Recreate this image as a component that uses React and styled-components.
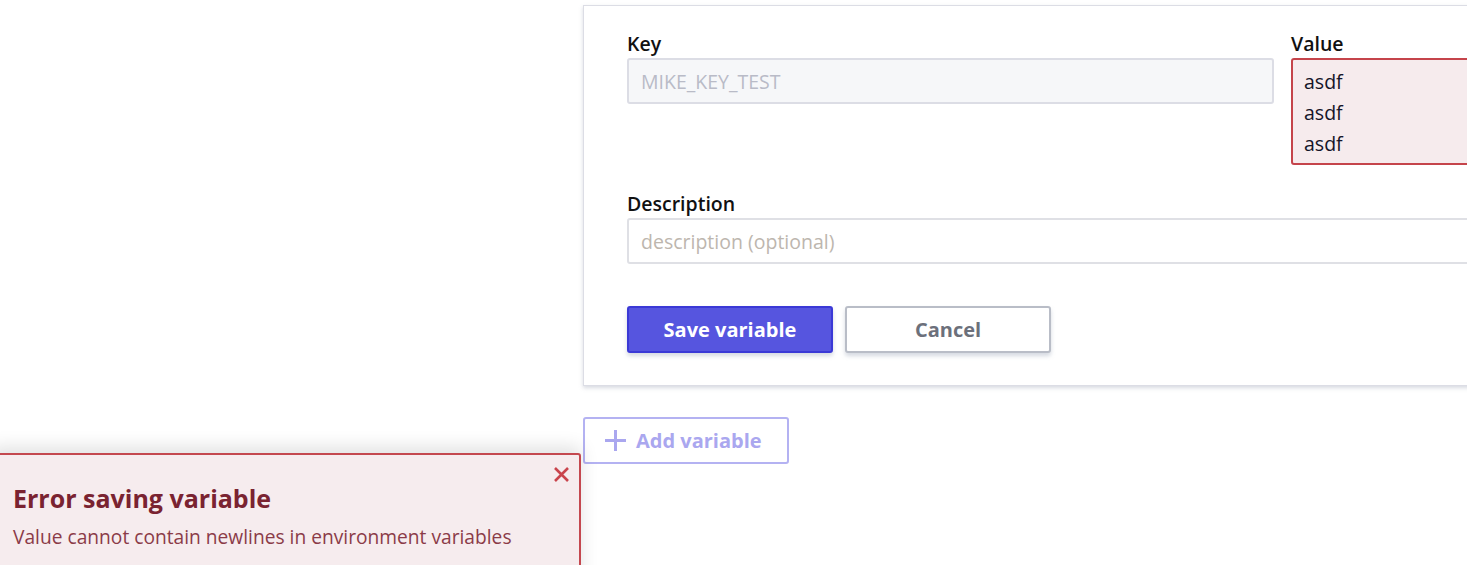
import styled, { createGlobalStyle } from 'styled-components';

const GlobalStyle = createGlobalStyle`
  html, body {
    margin: 0;
    padding: 0;
    background: #ffffff;
    overflow: hidden;
    font-family: "Open Sans", "Noto Sans", sans-serif;
  }
  * { box-sizing: border-box; }
`;

const Page = styled.div`
  width: 1467px;
  height: 565px;
  overflow: hidden;
  position: relative;
`;

const Main = styled.main`
  margin-left: 583px;
  padding-top: 5px;
  width: 1100px;
`;

const Card = styled.section`
  border: 1px solid #dcdde5;
  background: #fff;
  padding: 26px 43px 32px 43px;
  box-shadow: 0 2px 4px rgba(140, 150, 170, 0.35);
`;

const Row = styled.div`
  display: grid;
  grid-template-columns: 647px 1fr;
  gap: 17px;
  align-items: start;
`;

const Field = styled.div`
  display: flex;
  flex-direction: column;
  margin-top: ${p => p.$mt || 0}px;
  margin-bottom: ${p => p.$mb || 0}px;
`;

const Label = styled.label`
  font-size: 19.5px;
  font-weight: 600;
  color: #111;
  line-height: 24px;
  margin-bottom: 2px;
`;

const Input = styled.input`
  height: 46px;
  font: inherit;
  font-size: 19.5px;
  padding: 0 12px;
  border: 2px solid ${p => (p.$disabled ? '#dcdde5' : '#dfe0e5')};
  border-radius: 3px;
  background: ${p => (p.$disabled ? '#f6f7f9' : '#fff')};
  color: ${p => (p.$disabled ? '#b9bbc7' : '#222')};
  outline: none;
  &::placeholder { color: #bdb6ae; }
`;

const TextArea = styled.textarea`
  height: 107px;
  font: inherit;
  font-size: 19.5px;
  line-height: 31px;
  padding: 6px 11px;
  border: 2px solid #c5444b;
  border-radius: 3px;
  background: #f6ebed;
  color: #141428;
  resize: none;
  outline: none;
  overflow: hidden;
`;

const Actions = styled.div`
  display: flex;
  gap: 12px;
`;

const Button = styled.button`
  width: 206px;
  height: 47px;
  font-family: inherit;
  font-size: 20px;
  font-weight: 700;
  border-radius: 3px;
  cursor: pointer;
  border: 2px solid ${p => (p.$primary ? '#3b39d6' : '#b9bdc7')};
  background: ${p => (p.$primary ? '#5655df' : '#fff')};
  color: ${p => (p.$primary ? '#fff' : '#6c707b')};
  box-shadow: 0 3px 4px rgba(150, 160, 180, 0.4);
`;

const AddButton = styled.button`
  margin-top: 31px;
  width: 206px;
  height: 47px;
  display: flex;
  align-items: center;
  gap: 9px;
  padding: 0 19px;
  font-family: inherit;
  font-size: 20px;
  font-weight: 700;
  color: #aaa7ef;
  background: #fff;
  border: 2px solid #b4b2f2;
  border-radius: 3px;
`;

const Toast = styled.div`
  position: absolute;
  left: -10px;
  top: 453px;
  width: 591px;
  height: 140px;
  background: #f6ecee;
  border: 2px solid #c4484f;
  border-radius: 3px;
  padding: 18px 20px 0 21px;
  box-shadow: 0 -6px 18px rgba(0, 0, 0, 0.12);
`;

const Close = styled.button`
  position: absolute;
  right: 8px;
  top: 9px;
  background: none;
  border: none;
  padding: 0;
  width: 20px;
  height: 20px;
  display: flex;
  align-items: center;
  justify-content: center;
`;

const ToastTitle = styled.div`
  font-size: 25px;
  font-weight: 700;
  color: #7a2331;
  line-height: 34px;
  margin-top: 8px;
`;

const ToastText = styled.div`
  font-size: 19.2px;
  color: #8b3b48;
  line-height: 28px;
  margin-top: 8px;
`;

const App = () => (
  <Page>
    <GlobalStyle />
    <Main>
      <Card>
        <Row>
          <Field>
            <Label>Key</Label>
            <Input $disabled value="MIKE_KEY_TEST" readOnly />
          </Field>
          <Field>
            <Label>Value</Label>
            <TextArea value={'asdf\nasdf\nasdf'} readOnly />
          </Field>
        </Row>
        <Field $mt={27} $mb={42}>
          <Label>Description</Label>
          <Input placeholder="description (optional)" />
        </Field>
        <Actions>
          <Button $primary>Save variable</Button>
          <Button>Cancel</Button>
        </Actions>
      </Card>
      <AddButton>
        <svg width="23" height="23" viewBox="0 0 23 23">
          <path d="M11.5 1v21M1 11.5h21" stroke="#aaa7ef" strokeWidth="3" />
        </svg>
        Add variable
      </AddButton>
    </Main>
    <Toast>
      <Close>
        <svg width="17" height="17" viewBox="0 0 17 17">
          <path d="M2 2l13 13M15 2L2 15" stroke="#c9444c" strokeWidth="2.6" />
        </svg>
      </Close>
      <ToastTitle>Error saving variable</ToastTitle>
      <ToastText>Value cannot contain newlines in environment variables</ToastText>
    </Toast>
  </Page>
);

export default App;
